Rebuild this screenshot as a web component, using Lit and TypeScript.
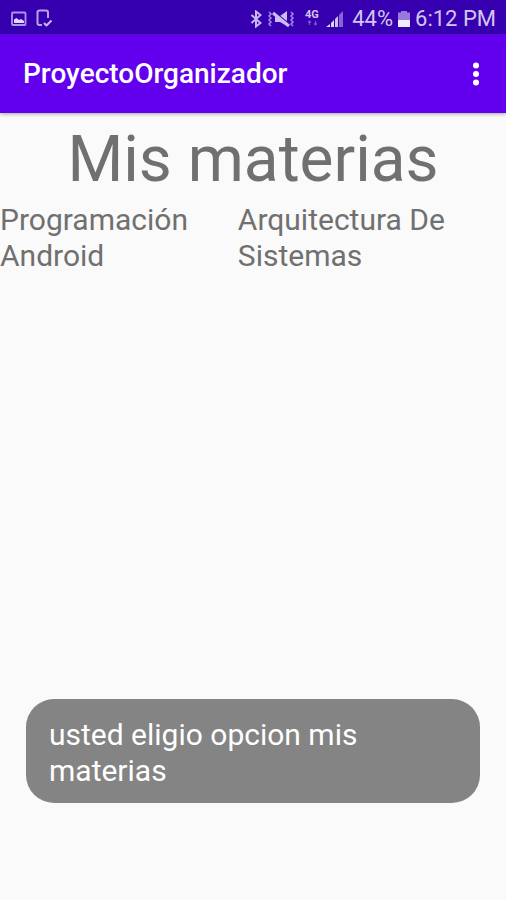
import { LitElement, html, css } from "lit";
import { customElement, property } from "lit/decorators.js";

@customElement("status-bar")
class StatusBar extends LitElement {
  static styles = css`
    :host {
      display: flex;
      align-items: center;
      justify-content: space-between;
      height: 34px;
      padding: 0 10px 0 11px;
      background: #3600b0;
      color: #d3c6f2;
      font-size: 22px;
      line-height: 34px;
      white-space: nowrap;
    }
    .group {
      display: flex;
      align-items: center;
      padding-top: 3px;
    }
    .notices {
      gap: 9px;
    }
    .system {
      gap: 5px;
    }
    svg {
      display: block;
      flex: none;
    }
    .network {
      margin-left: 5px;
    }
    .signal {
      margin-right: 3px;
    }
    .network text {
      font: 700 11px Roboto, sans-serif;
    }
  `;

  render() {
    return html`
      <div class="group notices">
        <svg width="16" height="16" viewBox="0 0 16 16" aria-hidden="true">
          <rect x="1" y="1.5" width="13.5" height="12.5" rx="1" fill="none" stroke="#ae96e4" stroke-width="1.8" />
          <path d="M3 12V8.5L5.500 7l2.500 2 2-1 3 2v2z" fill="#e2d8f8" />
        </svg>
        <svg width="17" height="19" viewBox="0 0 17 19" aria-hidden="true">
          <path d="M12 9V3.500q0-2-2-2H3.500q-2 0-2 2V14q0 2 2 2H6" fill="none" stroke="#b9a4e8" stroke-width="2" />
          <path d="M8 14l3 3M10.500 16.500l5-5" fill="none" stroke="#cbbaf0" stroke-width="2" />
        </svg>
      </div>
      <div class="group system">
        <svg width="12" height="18" viewBox="0 0 12 18" aria-label="Bluetooth">
          <path d="M1.500 5l9 8L6 16.500V1.500L10.500 5l-9 8" fill="none" stroke="#c8b8ef" stroke-width="2" />
        </svg>
        <svg width="28" height="18" viewBox="0 0 28 18" aria-label="Vibración">
          <path d="M2 2l2 2-2 2 2 2-2 2 2 2-2 2 2 2M24 2l2 2-2 2 2 2-2 2 2 2-2 2 2 2" fill="none" stroke="#a68de0" stroke-width="1.500" />
          <path d="M8 6h5l7-5v15l-7-4H8z" fill="#cbbcf1" />
          <path d="M7 2l15 12" stroke="#3600b0" stroke-width="2" />
          <path d="M6 3l16 13" stroke="#cbbcf1" stroke-width="3" />
        </svg>
        <svg class="network" width="16" height="19" viewBox="0 0 16 19" aria-label="4G">
          <text x="0" y="9" fill="#d3c6f2">4G</text>
          <path d="M4.500 16v-4M3 13.500L4.500 12 6 13.500M10.500 12v4M9 14.500l1.500 1.500 1.500-1.500" fill="none" stroke="#7955cd" stroke-width="1.200" />
        </svg>
        <svg class="signal" width="18" height="18" viewBox="0 0 18 18" aria-label="Señal">
          <path d="M0 17l4-3v3zM5 17v-4l3-3v7z" fill="#ded3f7" />
          <path d="M9 17V9l3-3v11z" fill="#cbbcf1" />
          <path d="M13 17V5l4-4v16z" fill="#8764d3" />
        </svg>
        <span>44%</span>
        <svg width="12" height="18" viewBox="0 0 12 18" aria-label="Batería">
          <path d="M0 17V2.500h3V1h6v1.500h3V17z" fill="#977ad9" />
          <path d="M0 10h12v7H0z" fill="#f0eafc" />
        </svg>
        <span>6:12 PM</span>
      </div>
    `;
  }
}

@customElement("app-bar")
class AppBar extends LitElement {
  @property() heading = "";

  static styles = css`
    :host {
      display: flex;
      align-items: center;
      justify-content: space-between;
      height: 79px;
      box-sizing: border-box;
      padding: 1px 10px 0 23px;
      background: #6200ee;
      color: #fff;
      box-shadow: 0 1px 4px rgba(0, 0, 0, 0.35);
    }
    .title {
      margin: 0;
      font-size: 28px;
      font-weight: 500;
      line-height: 36px;
    }
    .menu {
      display: grid;
      place-items: center;
      width: 40px;
      height: 48px;
      padding: 0;
      border: 0;
      background: none;
      color: inherit;
    }
  `;

  render() {
    return html`
      <h1 class="title">${this.heading}</h1>
      <button class="menu" aria-label="Más opciones">
        <svg width="8" height="24" viewBox="0 0 8 24" fill="currentColor">
          <circle cx="4" cy="3.500" r="3" />
          <circle cx="4" cy="12" r="3" />
          <circle cx="4" cy="20.500" r="3" />
        </svg>
      </button>
    `;
  }
}

@customElement("app-root")
class AppRoot extends LitElement {
  private subjects = ["Programación Android", "Arquitectura De Sistemas"];

  static styles = css`
    :host {
      display: flex;
      flex-direction: column;
      min-height: 100vh;
      background: #fafafa;
      color: #707070;
      font-family: Roboto, sans-serif;
    }
    .content {
      flex: 1;
      padding-top: 9px;
    }
    .heading {
      margin: 0 0 4px;
      font-size: 64px;
      font-weight: 400;
      line-height: 76px;
      text-align: center;
    }
    .subjects {
      display: grid;
      grid-template-columns: 47% 1fr;
      margin: 0;
      padding: 0;
      list-style: none;
      font-size: 30px;
      line-height: 36px;
    }
    .toast {
      margin: 0 26px 97px;
      padding: 18px 23px 14px;
      border-radius: 28px;
      background: #848484;
      color: #fff;
      font-size: 30px;
      line-height: 36px;
    }
  `;

  render() {
    return html`
      <status-bar></status-bar>
      <app-bar heading="ProyectoOrganizador"></app-bar>
      <main class="content">
        <h2 class="heading">Mis materias</h2>
        <ul class="subjects">
          ${this.subjects.map((subject) => html`<li>${subject}</li>`)}
        </ul>
      </main>
      <div class="toast" role="status">usted eligio opcion mis materias</div>
    `;
  }
}
